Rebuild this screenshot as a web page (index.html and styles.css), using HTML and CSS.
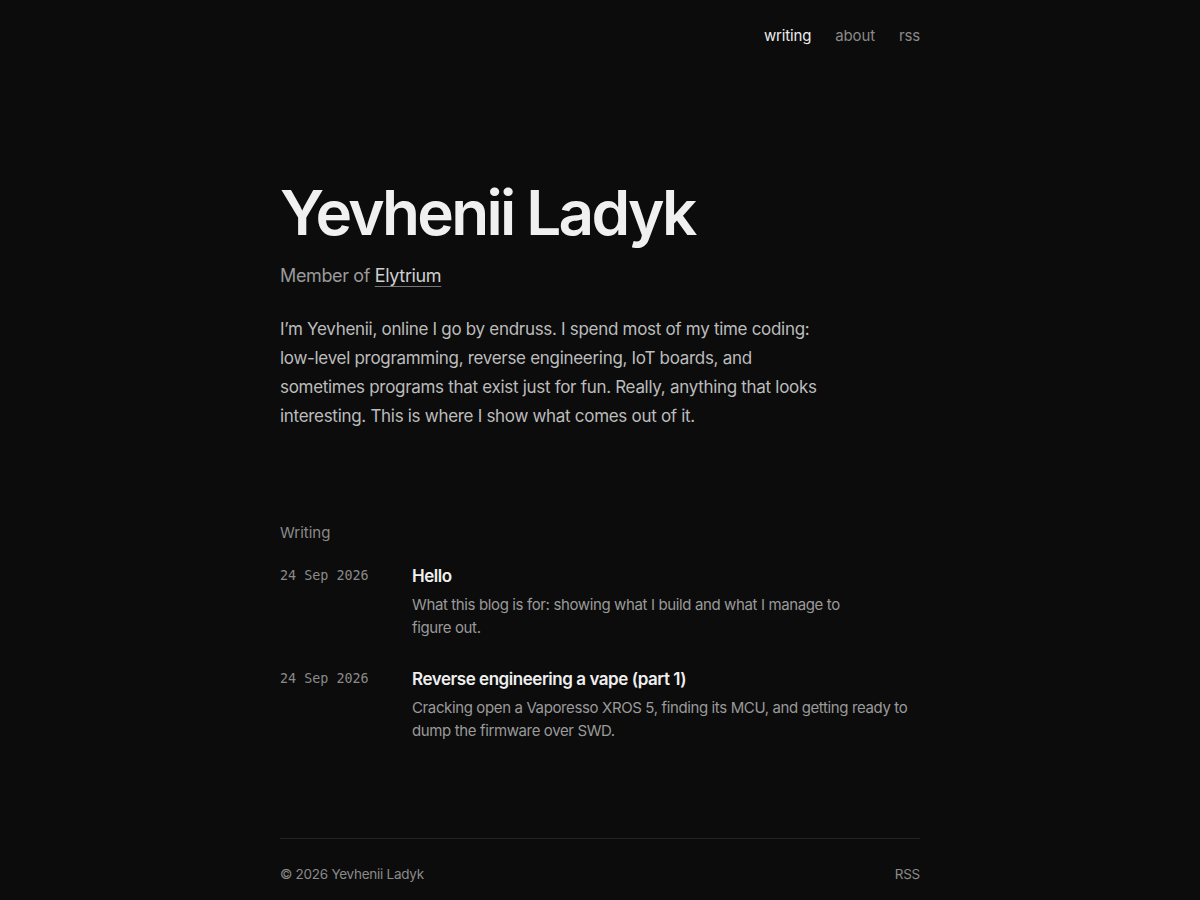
FILE: index.html
```html
<!DOCTYPE html>
<html lang="en">
<head>
<meta charset="utf-8">
<title>Yevhenii Ladyk</title>
<link rel="stylesheet" href="styles.css">
</head>
<body>
<div class="page">
  <nav class="nav">
    <a class="nav-link active" href="#">writing</a>
    <a class="nav-link" href="#">about</a>
    <a class="nav-link" href="#">rss</a>
  </nav>

  <header class="hero">
    <h1 class="title">Yevhenii Ladyk</h1>
    <p class="subtitle">Member of <a href="#" class="sub-link">Elytrium</a></p>
    <p class="intro">I’m Yevhenii, online I go by endruss. I spend most of my time coding: low-level programming, reverse engineering, IoT boards, and sometimes programs that exist just for fun. Really, anything that looks interesting. This is where I show what comes out of it.</p>
  </header>

  <section class="writing">
    <h2 class="section-label">Writing</h2>
    <ul class="posts">
      <li class="post">
        <time class="post-date">24 Sep 2026</time>
        <div class="post-body">
          <a href="#" class="post-title">Hello</a>
          <p class="post-desc">What this blog is for: showing what I build and what I manage to figure out.</p>
        </div>
      </li>
      <li class="post">
        <time class="post-date">24 Sep 2026</time>
        <div class="post-body">
          <a href="#" class="post-title">Reverse engineering a vape (part 1)</a>
          <p class="post-desc">Cracking open a Vaporesso XROS 5, finding its MCU, and getting ready to dump the firmware over SWD.</p>
        </div>
      </li>
    </ul>
  </section>

  <footer class="footer">
    <span>© 2026 Yevhenii Ladyk</span>
    <a href="#" class="footer-link">RSS</a>
  </footer>
</div>
</body>
</html>
```
FILE: styles.css
```css
html, body {
  margin: 0;
  padding: 0;
  background: #0c0c0c;
}
body {
  font-family: Inter, "Noto Sans", sans-serif;
  color: #bdbdbd;
}
a { text-decoration: none; color: inherit; }
.page {
  width: 640px;
  margin: 0 auto;
}
.nav {
  display: flex;
  justify-content: flex-end;
  gap: 24px;
  padding-top: 27px;
  font-size: 15px;
  line-height: 18px;
  letter-spacing: -0.01em;
}
.nav-link { color: #8a8a8a; }
.nav-link.active { color: #ececec; }

.hero { margin-top: 132px; }
.title {
  margin: 0;
  font-size: 62px;
  line-height: 72px;
  font-weight: 600;
  letter-spacing: -0.044em;
  color: #f0f0f0;
}
.subtitle {
  margin: 14px 0 0;
  font-size: 18px;
  line-height: 26px;
  letter-spacing: -0.02em;
  color: #9a9a9a;
}
.sub-link {
  color: #cfcfcf;
  text-decoration: underline;
  text-decoration-color: #777;
  text-underline-offset: 4px;
  text-decoration-thickness: 1px;
}
.intro {
  margin: 26px 0 0;
  max-width: 541px;
  font-size: 17px;
  line-height: 29px;
  letter-spacing: -0.3px;
  color: #bcbcbc;
}
.writing { margin-top: 92px; }
.section-label {
  margin: 0;
  font-size: 15px;
  line-height: 20px;
  font-weight: 400;
  color: #8a8a8a;
}
.posts {
  list-style: none;
  margin: 21px 0 0;
  padding: 0;
  display: flex;
  flex-direction: column;
  gap: 28px;
}
.post {
  display: grid;
  grid-template-columns: 132px 1fr;
}
.post-date {
  font-family: "DejaVu Sans Mono", monospace;
  font-size: 13.4px;
  line-height: 24px;
  color: #8a8a8a;
}
.post-title {
  display: block;
  font-size: 17px;
  line-height: 24px;
  font-weight: 600;
  letter-spacing: -0.027em;
  color: #efefef;
}
.post-desc {
  margin: 5px 0 0;
  max-width: 498px;
  font-size: 15px;
  line-height: 23px;
  letter-spacing: -0.025em;
  color: #9a9a9a;
  text-wrap: pretty;
}
.footer {
  margin-top: 96px;
  border-top: 1px solid #232323;
  padding: 25px 0 20px;
  display: flex;
  justify-content: space-between;
  font-size: 13.5px;
  line-height: 20px;
  letter-spacing: -0.02em;
  color: #8a8a8a;
}
.footer-link { color: #8a8a8a; }
```
